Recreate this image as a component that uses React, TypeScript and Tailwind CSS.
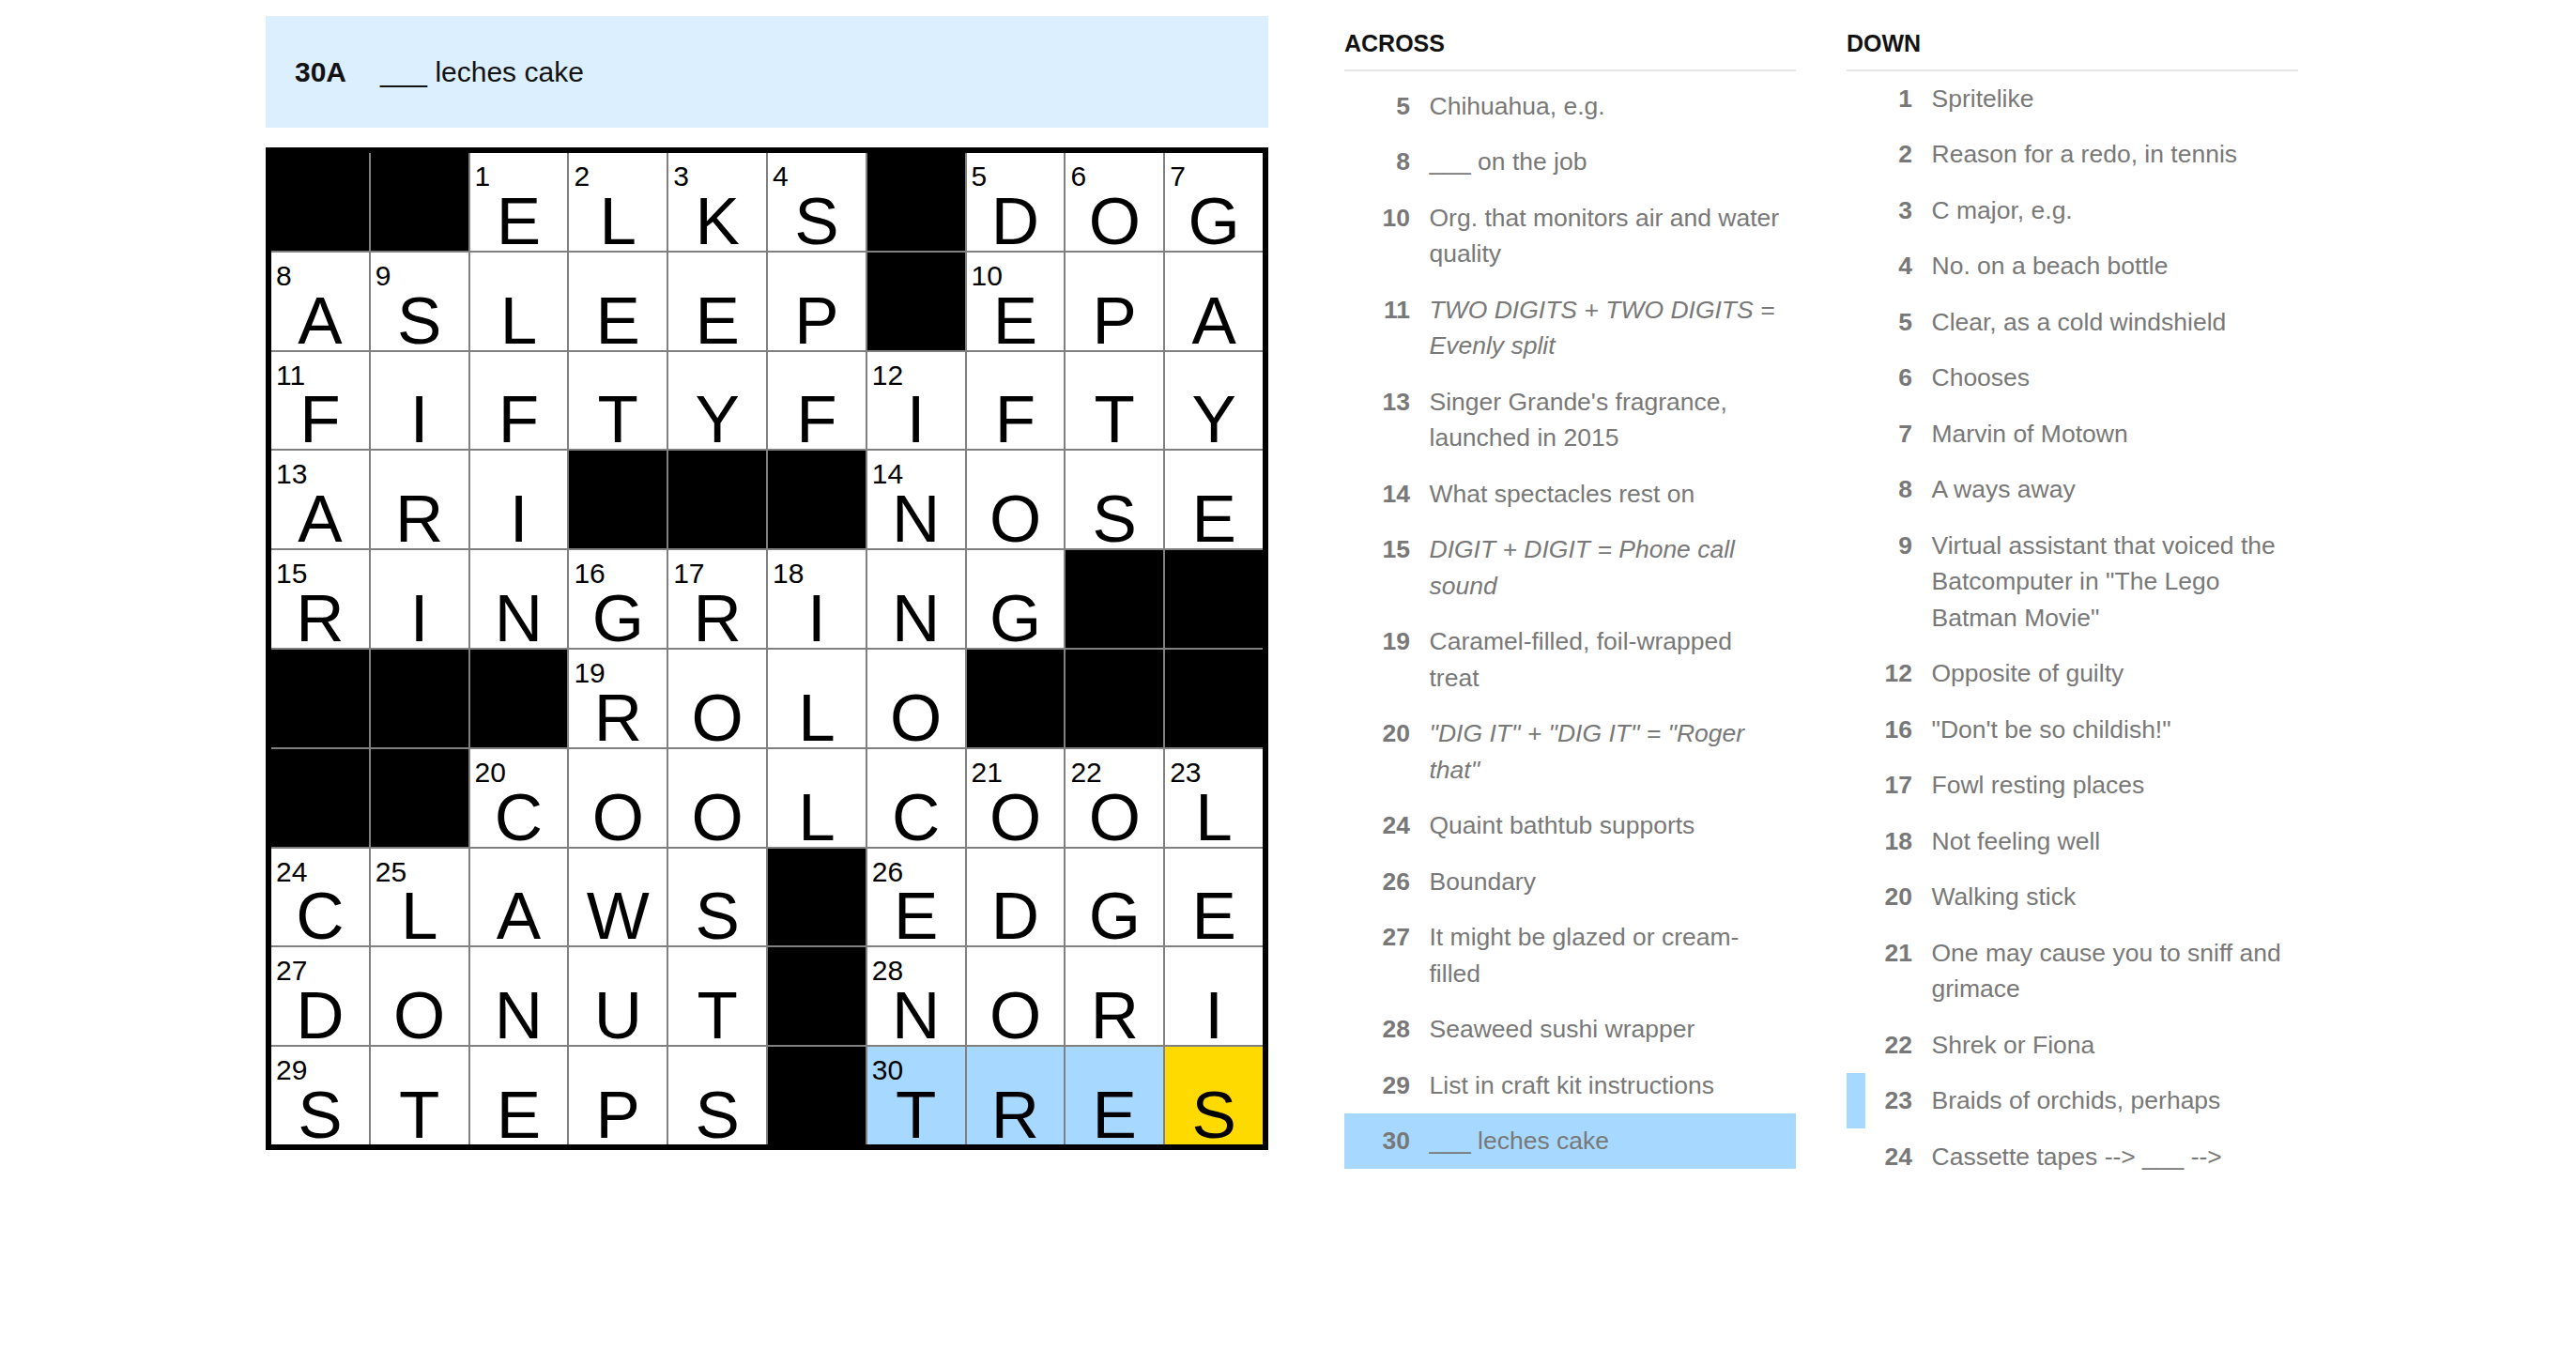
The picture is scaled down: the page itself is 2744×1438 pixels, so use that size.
import React from 'react';

type Clue = { num: number; lines: string[]; italic?: boolean };

// Filled board, '#' marks a block
const SOLUTION = [
  '##ELKS#DOG',
  'ASLEEP#EPA',
  'FIFTYFIFTY',
  'ARI###NOSE',
  'RINGRING##',
  '###ROLO###',
  '##COOLCOOL',
  'CLAWS#EDGE',
  'DONUT#NORI',
  'STEPS#TRES',
];

const ACTIVE_ROW = 9;
const WORD_COLS = [6, 7, 8, 9];
const CURSOR_COL = 9;

const ACROSS: Clue[] = [
  { num: 5, lines: ['Chihuahua, e.g.'] },
  { num: 8, lines: ['___ on the job'] },
  { num: 10, lines: ['Org. that monitors air and water', 'quality'] },
  { num: 11, lines: ['TWO DIGITS + TWO DIGITS =', 'Evenly split'], italic: true },
  { num: 13, lines: ["Singer Grande's fragrance,", 'launched in 2015'] },
  { num: 14, lines: ['What spectacles rest on'] },
  { num: 15, lines: ['DIGIT + DIGIT = Phone call', 'sound'], italic: true },
  { num: 19, lines: ['Caramel-filled, foil-wrapped', 'treat'] },
  { num: 20, lines: ['"DIG IT" + "DIG IT" = "Roger', 'that"'], italic: true },
  { num: 24, lines: ['Quaint bathtub supports'] },
  { num: 26, lines: ['Boundary'] },
  { num: 27, lines: ['It might be glazed or cream-', 'filled'] },
  { num: 28, lines: ['Seaweed sushi wrapper'] },
  { num: 29, lines: ['List in craft kit instructions'] },
  { num: 30, lines: ['___ leches cake'] },
];

const DOWN: Clue[] = [
  { num: 1, lines: ['Spritelike'] },
  { num: 2, lines: ['Reason for a redo, in tennis'] },
  { num: 3, lines: ['C major, e.g.'] },
  { num: 4, lines: ['No. on a beach bottle'] },
  { num: 5, lines: ['Clear, as a cold windshield'] },
  { num: 6, lines: ['Chooses'] },
  { num: 7, lines: ['Marvin of Motown'] },
  { num: 8, lines: ['A ways away'] },
  { num: 9, lines: ['Virtual assistant that voiced the', 'Batcomputer in "The Lego', 'Batman Movie"'] },
  { num: 12, lines: ['Opposite of guilty'] },
  { num: 16, lines: ['"Don\'t be so childish!"'] },
  { num: 17, lines: ['Fowl resting places'] },
  { num: 18, lines: ['Not feeling well'] },
  { num: 20, lines: ['Walking stick'] },
  { num: 21, lines: ['One may cause you to sniff and', 'grimace'] },
  { num: 22, lines: ['Shrek or Fiona'] },
  { num: 23, lines: ['Braids of orchids, perhaps'] },
  { num: 24, lines: ['Cassette tapes --> ___ -->'] },
];

const isBlock = (r: number, c: number) =>
  r < 0 || c < 0 || r >= 10 || c >= 10 || SOLUTION[r][c] === '#';

// Standard numbering: a white square starting an across or down entry
function buildNumbers() {
  const nums: (number | null)[][] = [];
  let n = 0;
  for (let r = 0; r < 10; r++) {
    const row: (number | null)[] = [];
    for (let c = 0; c < 10; c++) {
      if (isBlock(r, c)) {
        row.push(null);
        continue;
      }
      const across = isBlock(r, c - 1) && !isBlock(r, c + 1);
      const down = isBlock(r - 1, c) && !isBlock(r + 1, c);
      row.push(across || down ? ++n : null);
    }
    nums.push(row);
  }
  return nums;
}

const NUMBERS = buildNumbers();

function Cell({ r, c }: { r: number; c: number }) {
  if (isBlock(r, c)) return <div className="bg-black" />;

  let bg = 'bg-white';
  if (r === ACTIVE_ROW && c === CURSOR_COL) bg = 'bg-[#ffda00]';
  else if (r === ACTIVE_ROW && WORD_COLS.includes(c)) bg = 'bg-[#a7d8ff]';

  const num = NUMBERS[r][c];
  return (
    <div className={`relative flex items-end justify-center ${bg}`}>
      {num !== null && (
        <span className="absolute top-[10px] left-[5px] text-[30px] leading-none text-black">{num}</span>
      )}
      <span className="text-[71px] leading-[62px] text-black">{SOLUTION[r][c]}</span>
    </div>
  );
}

function ClueList({
  title,
  clues,
  activeNum,
  crossNum,
  listClass,
}: {
  title: string;
  clues: Clue[];
  activeNum?: number;
  crossNum?: number;
  listClass: string;
}) {
  return (
    <div className="w-[481px] shrink-0">
      <h3 className="mt-[14px] pb-[13px] text-[25px] leading-[30px] font-bold text-[#121212] border-b-2 border-[#e6e6e6]">
        {title}
      </h3>
      <ol className={listClass}>
        {clues.map((clue) => {
          const active = clue.num === activeNum;
          const cross = clue.num === crossNum;
          return (
            <li
              key={clue.num}
              className={`flex py-[10.5px] text-[26.5px] leading-[38.5px] text-[#787878] ${
                active ? 'bg-[#a7d8ff]' : ''
              } ${cross ? 'shadow-[inset_20px_0_0_#a7d8ff]' : ''}`}
            >
              <span className="w-[70px] shrink-0 text-right font-bold">{clue.num}</span>
              <span className={`ml-[20.5px] ${clue.italic ? 'italic' : ''}`}>
                {clue.lines.map((line, i) => (
                  <span key={i} className="block whitespace-nowrap">
                    {line}
                  </span>
                ))}
              </span>
            </li>
          );
        })}
      </ol>
    </div>
  );
}

export default function App() {
  return (
    <div className="min-h-screen bg-white flex pl-[283px] pt-[17px] font-['Liberation_Sans',Arial,sans-serif]">
      <div className="w-[1068px] shrink-0">
        <div className="h-[119px] bg-[#dcefff] flex items-center pl-[31px] text-[30px] text-[#121212]">
          <span className="w-[91px] font-bold">30A</span>
          <span>___ leches cake</span>
        </div>
        <div className="mt-[21px] w-[1068px] h-[1068px] grid grid-cols-10 grid-rows-10 gap-[2px] bg-[#808080] border-[6px] border-black">
          {SOLUTION.map((row, r) => row.split('').map((_, c) => <Cell key={`${r}-${c}`} r={r} c={c} />))}
        </div>
      </div>
      <div className="ml-[81px] flex gap-[54px]">
        <ClueList title="ACROSS" clues={ACROSS} activeNum={30} listClass="pt-[7px]" />
        <ClueList title="DOWN" clues={DOWN} crossNum={23} listClass="-mt-px" />
      </div>
    </div>
  );
}
